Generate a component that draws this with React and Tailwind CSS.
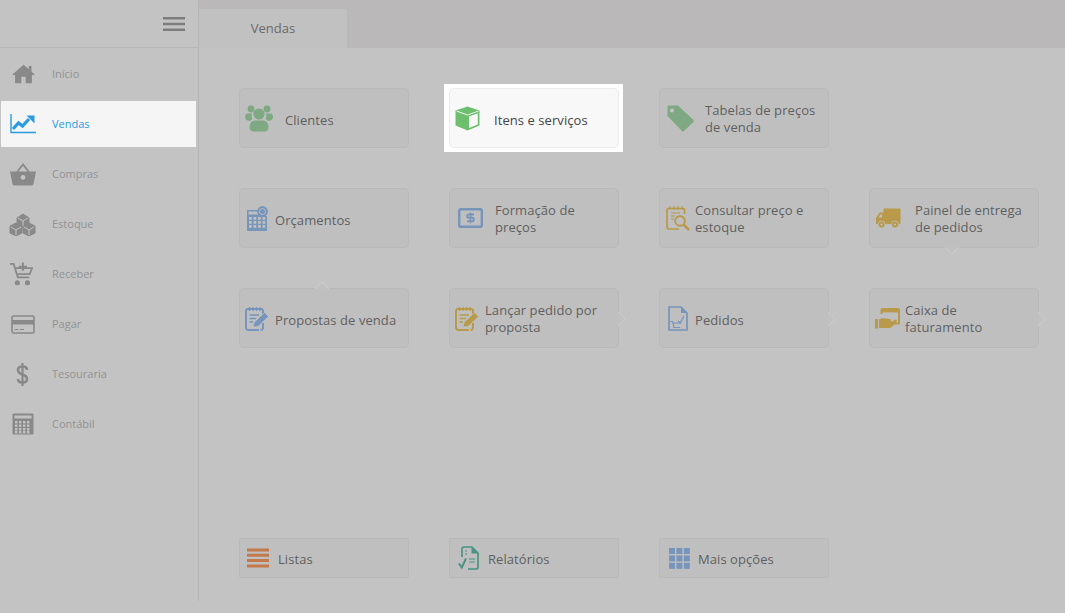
import React from "react";

const Svg = ({ w = 24, h = 24, vb, rw, rh, className = "", children }) => (
  <svg width={rw || w} height={rh || h} viewBox={vb || `0 0 ${w} ${h}`} className={`shrink-0 ${className}`}>{children}</svg>
);

const G = "#898989";
const HomeI = () => (
  <Svg w={26} h={22} rw={23} rh={20}><path d="M13 0.5 L19 5.5 V2 h3 v6.3 L26 12 h-3.5 V21.5 H15.5 V14 h-5 v7.5 H3.5 V12 H0 Z" fill={G} /></Svg>
);
const ChartI = () => (
  <Svg w={26} h={20}>
    <path d="M1 0 V18.5 H26" stroke="#2a9be0" strokeWidth="1.4" fill="none" />
    <path d="M3 15 L8.5 9 L12.5 12 L19 5" stroke="#2a9be0" strokeWidth="3.2" fill="none" />
    <path d="M16.5 1.5 H24.5 V9.5 Z" fill="#2a9be0" />
  </Svg>
);
const BasketI = () => (
  <Svg w={26} h={23}>
    <path d="M7 9 L13 1.5 L19 9" stroke={G} strokeWidth="1.8" fill="none" />
    <path fillRule="evenodd" d="M0 8.5 H26 L23.5 21 Q23 22.5 21.5 22.5 H4.5 Q3 22.5 2.5 21 Z M13 12 a2.4 2.4 0 1 0 .01 0 Z" fill={G} />
  </Svg>
);
const CubesI = () => (
  <Svg w={27} h={24}>
    <g stroke={G} strokeWidth="1" fill={G}>
      <path d="M8 6 L14 2 L20 6 V12 L14 15 L8 12 Z" />
      <path d="M1 14 L7 11 L13 14 V21 L7 24 L1 21 Z" />
      <path d="M14 14 L20 11 L26 14 V21 L20 24 L14 21 Z" />
    </g>
    <g stroke="#c3c3c3" strokeWidth="1" fill="none">
      <path d="M9 6 L14 9 L19 6 M14 9 V14" />
      <path d="M2 15 L7 18 L12 15 M7 18 V23" />
      <path d="M15 15 L20 18 L25 15 M20 18 V23" />
    </g>
  </Svg>
);
const CartI = () => (
  <Svg w={25} h={26} rw={23} rh={25}>
    <path d="M0 1.5 H4 L8.5 16 H21" stroke={G} strokeWidth="1.9" fill="none" />
    <path d="M6 6 H24 L21.5 12.5 H8" stroke={G} strokeWidth="1.9" fill="none" />
    <path d="M14 0 V9 M9.5 4.5 H18.5" stroke={G} strokeWidth="2.2" />
    <circle cx="8" cy="22" r="2.8" fill={G} />
    <circle cx="19" cy="22" r="2.8" fill={G} />
  </Svg>
);
const CardI = () => (
  <Svg w={24} h={19}>
    <rect x="1" y="1" width="22" height="17" rx="1.5" fill="none" stroke={G} strokeWidth="1.6" />
    <rect x="1" y="5" width="22" height="4.5" fill={G} />
    <path d="M3.5 14.5 H7.5 M9 14.5 H13" stroke={G} strokeWidth="1.2" />
  </Svg>
);
const DollarI = () => (
  <Svg w={13} h={23}>
    <path d="M6.5 0 V23" stroke={G} strokeWidth="2.2" />
    <path d="M11 7 Q11 3.5 6.5 3.5 Q2 3.5 2 7 Q2 10 6.5 11.5 Q11 13 11 16 Q11 19.5 6.5 19.5 Q2 19.5 2 16" fill="none" stroke={G} strokeWidth="2.6" />
  </Svg>
);
const CalcI = () => (
  <Svg w={22} h={22}>
    <rect x="0.5" y="0.5" width="21" height="21" rx="1" fill={G} />
    <rect x="2.5" y="2.5" width="17" height="3" fill="#c3c3c3" />
    {[8, 11.5, 15, 18].map((y) => [3, 7, 11, 15].map((x) => (
      <rect key={`${x}-${y}`} x={x} y={y} width="2.4" height="2.4" fill="#c3c3c3" />
    )))}
  </Svg>
);
const Burger = () => (
  <Svg w={22} h={14}>
    <path d="M0 1.2 H22 M0 7 H22 M0 12.8 H22" stroke="#7c7c7c" strokeWidth="2.4" />
  </Svg>
);

const GR = "#7fa983", BL = "#7794bb", YE = "#b89a4a", OR = "#c4794a", TE = "#4a9383";

const UsersI = () => (
  <Svg w={28} h={27}>
    <g fill={GR}>
      <circle cx="6" cy="4" r="3.4" /><circle cx="22" cy="4" r="3.4" />
      <path d="M0 12 Q0 8.5 3 8.5 H7 Q6 12 7.5 14 L5 16 Q0 15.5 0 12 Z" />
      <path d="M28 12 Q28 8.5 25 8.5 H21 Q22 12 20.5 14 L23 16 Q28 15.5 28 12 Z" />
      <circle cx="14" cy="9" r="5.6" />
      <path d="M4.5 22 Q5 15.5 10 15.5 H18 Q23 15.5 23.5 22 Q23.5 26.5 19 26.5 H9 Q4.5 26.5 4.5 22 Z" />
    </g>
  </Svg>
);
const BoxI = () => (
  <Svg w={25} h={25}>
    <path d="M12.5 0.5 L24.5 4.5 V19.5 L12.5 24.5 L0.5 19.5 V4.5 Z" fill="#6cbf6c" />
    <path d="M1.5 5 L12.5 9 L23.5 5" fill="none" stroke="#f8f8f8" strokeWidth="1" />
    <path d="M14 10.5 L22.8 7.2 V18.4 L14 22 Z" fill="#f8f8f8" />
  </Svg>
);
const TagI = () => (
  <Svg w={27} h={27}>
    <path d="M1.5 0.5 H11 L26.5 15 Q27 16 26.5 17 L17 26 Q16 27 15 26 L0.5 11 V1.5 Q0.5 0.5 1.5 0.5 Z" fill={GR} />
    <circle cx="5" cy="5.5" r="2" fill="#c5c5c5" />
  </Svg>
);
const CalcBlueI = () => (
  <Svg w={21} h={25}>
    <path d="M0 4 H14 V10 H20 V25 H0 Z" fill={BL} />
    <rect x="1.5" y="5.5" width="11" height="3" fill="#bfbfbf" />
    {[11, 15, 19].map((y) => [2, 6.5, 11, 15.5].map((x) => (
      <rect key={`${x}-${y}`} x={x} y={y} width="2.8" height="2.8" fill="#bfbfbf" />
    )))}
    <circle cx="15.5" cy="5.5" r="5.4" fill={BL} />
    <circle cx="15.5" cy="5.5" r="3" fill="none" stroke="#bfbfbf" strokeWidth="0.9" />
  </Svg>
);
const BillI = () => (
  <Svg w={25} h={20}>
    <rect x="1.2" y="1.2" width="22.6" height="17.6" rx="1.5" fill="none" stroke={BL} strokeWidth="2.4" />
    <path d="M16 6.5 H10.5 Q9.2 6.5 9.2 8 Q9.2 9.8 11 9.8 H14 Q15.8 9.8 15.8 11.5 Q15.8 13.3 14.2 13.3 H9" fill="none" stroke={BL} strokeWidth="2" />
    <path d="M12.5 4.5 V15.5" stroke={BL} strokeWidth="1.4" />
  </Svg>
);
const SearchDocI = () => (
  <Svg w={24} h={26}>
    <path d="M13 24 H3 Q1 24 1 22 V5 Q1 3.5 2.5 3.5 H17 Q18.5 3.5 18.5 5 V9" fill="none" stroke={YE} strokeWidth="1.7" />
    <path d="M4 1 V5 M8 1 V5 M12 1 V5 M16 1 V5" stroke={YE} strokeWidth="1.2" />
    <path d="M5 8 H14 M5 11 H9 M5 14 H8" stroke={YE} strokeWidth="1.2" />
    <circle cx="14" cy="16" r="4.8" fill="none" stroke={YE} strokeWidth="1.9" />
    <path d="M17.5 19.5 L23 25" stroke={YE} strokeWidth="2.6" />
  </Svg>
);
const TruckI = () => (
  <Svg w={25} h={21}>
    <rect x="7.5" y="0.5" width="17" height="15.5" rx="0.8" fill={YE} />
    <path d="M8 4.5 H3.5 L0 10 V16 H8 Z" fill={YE} />
    <path d="M2.4 9.5 L4.4 6.5 H6 V9.5 Z" fill="#bfbfbf" />
    <circle cx="5.5" cy="16.5" r="3.5" fill={YE} stroke="#bfbfbf" strokeWidth="0.8" />
    <circle cx="19" cy="16.5" r="3.5" fill={YE} stroke="#bfbfbf" strokeWidth="0.8" />
    <circle cx="5.5" cy="16.5" r="1.1" fill="#bfbfbf" />
    <circle cx="19" cy="16.5" r="1.1" fill="#bfbfbf" />
  </Svg>
);
const NoteI = ({ c }) => (
  <Svg w={24} h={25}>
    <path d="M14 24 H3.5 Q1 24 1 21.5 V5 Q1 3 3 3 H16 Q18 3 18 5 V9 M18 17 V21.5 Q18 24 15.5 24" fill="none" stroke={c} strokeWidth="1.9" />
    <path d="M4.5 1 V5 M8 1 V5 M11.5 1 V5 M15 1 V5" stroke={c} strokeWidth="1.2" />
    <path d="M4.5 9 H14 M4.5 12.5 H11 M4.5 16 H8" stroke={c} strokeWidth="1.3" />
    <path d="M8 21 L9 16.5 L19.5 6.5 L23.5 10.5 L13 20.5 Z" fill={c} stroke="#bfbfbf" strokeWidth="0.8" />
  </Svg>
);
const OrderI = () => (
  <Svg w={20} h={25}>
    <path d="M1 1 H13 L19 7 V24 H1 Z" fill="none" stroke={BL} strokeWidth="1.7" />
    <path d="M13 1 V7 H19 Z" fill={BL} />
    <path d="M2.5 15.5 H4.5 L6 21.5 H12 M5 17 H13.5" fill="none" stroke={BL} strokeWidth="1.1" />
    <path d="M10 15 L12 17 L16 10" fill="none" stroke={BL} strokeWidth="1.3" />
  </Svg>
);
const CashI = () => (
  <Svg w={25} h={21}>
    <path d="M6.5 6 V2 Q6.5 1 7.5 1 H23 Q24 1 24 2 V15.5 H18" fill="none" stroke={YE} strokeWidth="2" />
    <rect x="6.5" y="1" width="17.5" height="3.4" fill={YE} />
    <rect x="0" y="11" width="3" height="9.5" fill={YE} />
    <path d="M4 11.5 Q7 9.5 10 10.5 L15 11 Q17 12 15 13.8 H11 L18 13.3 L20.5 11.5 Q22.5 11.5 21.5 14 L17 19 Q16 20 14 20 H4 Z" fill={YE} />
  </Svg>
);
const ListI = () => (
  <Svg w={22} h={20}>
    <path d="M0 2 H22 M0 7.3 H22 M0 12.6 H22 M0 17.9 H22" stroke={OR} strokeWidth="3" />
  </Svg>
);
const ReportI = () => (
  <Svg w={21} h={24}>
    <path d="M4 11 V3 Q4 1 6 1 H14 L20 7 V21 Q20 23 18 23 H10" fill="none" stroke={TE} strokeWidth="1.7" />
    <path d="M13.5 1 L20 7.5 H13.5 Z" fill={TE} />
    <path d="M7 5 H9 M7 8 H9 M11 13 H17 M11 16 H17" stroke={TE} strokeWidth="1.2" />
    <path d="M1 17.5 L3.8 21.5 L8 12.5" fill="none" stroke={TE} strokeWidth="2" />
  </Svg>
);
const GridI = () => (
  <Svg w={21} h={21}>
    {[0, 7.4, 14.8].map((y) => [0, 7.4, 14.8].map((x) => (
      <rect key={`${x}-${y}`} x={x} y={y} width="6" height="6" fill={BL} />
    )))}
  </Svg>
);

const menu = [
  { label: "Início", Icon: HomeI, cls: "ml-[11px] w-[41px]" },
  { label: "Vendas", Icon: ChartI, cls: "ml-[9px] w-[43px]" },
  { label: "Compras", Icon: BasketI, cls: "ml-[9px] w-[43px]" },
  { label: "Estoque", Icon: CubesI, cls: "ml-[8px] w-[44px]" },
  { label: "Receber", Icon: CartI, cls: "ml-[9px] w-[43px]" },
  { label: "Pagar", Icon: CardI, cls: "ml-[10px] w-[42px]" },
  { label: "Tesouraria", Icon: DollarI, cls: "ml-[15px] w-[37px]" },
  { label: "Contábil", Icon: CalcI, cls: "ml-[11px] w-[41px]" },
];

const Arrow = ({ dir }) => {
  if (dir === "right")
    return (
      <svg width="8" height="16" viewBox="0 0 8 16" className="absolute right-[-8px] top-[22px]">
        <path d="M0 1 L7 8 L0 15 Z" fill="#c1c1c1" />
        <path d="M0 1 L7 8 L0 15" fill="none" stroke="#cbcbcb" />
      </svg>
    );
  if (dir === "down")
    return (
      <svg width="16" height="8" viewBox="0 0 16 8" className="absolute bottom-[-8px] left-[74px]">
        <path d="M1 0 L8 7 L15 0 Z" fill="#c1c1c1" />
        <path d="M1 0 L8 7 L15 0" fill="none" stroke="#cbcbcb" />
      </svg>
    );
  return (
    <svg width="16" height="8" viewBox="0 0 16 8" className="absolute top-[-8px] left-[74px]">
      <path d="M1 8 L8 1 L15 8 Z" fill="#c1c1c1" />
      <path d="M1 8 L8 1 L15 8" fill="none" stroke="#cbcbcb" />
    </svg>
  );
};

const Card = ({ icon: Icon, lines, pad, gap, arrow, small, hi }) => (
  <div className={`relative flex w-[170px] items-center border ${small ? "h-[40px] rounded-[2px]" : "h-[60px] rounded-[5px]"} ${pad} ${hi ? "border-[#ececec] bg-[#f8f8f8] text-[#454545]" : "border-[#b9b9b9] bg-[#bfbfbf] text-[#5f5f5f]"}`}>
    <Icon />
    <div className={`${gap} ${lines.length > 1 || small ? "pt-[2px]" : "pt-[4px]"} text-[13px] leading-[17px] tracking-[0.07px]`}>
      {lines.map((l) => <div key={l} className="whitespace-nowrap">{l}</div>)}
    </div>
    {arrow && <Arrow dir={arrow} />}
  </div>
);

export default function App() {
  return (
    <div className="flex h-[613px] w-[1065px] overflow-hidden bg-[#c3c3c3] font-['Open_Sans',sans-serif]">
      <aside className="h-[601px] w-[199px] shrink-0 border-r border-[#b5b5b5]">
        <div className="flex h-[48px] items-center justify-end border-b border-[#b8b8b8] pr-[13px]">
          <Burger />
        </div>
        <nav className="pt-[1px]">
          {menu.map(({ label, Icon, cls }) => {
            const on = label === "Vendas";
            return (
              <div key={label} className="flex h-[50px] items-center">
                <div className={`ml-[1px] flex h-[46px] w-[195px] items-center text-[11px] ${on ? "bg-[#f5f5f5] text-[#2a9be0]" : "text-[#929292]"}`}>
                  <div className={`flex ${cls} items-center`}><Icon /></div>
                  <span className="-ml-[1px]">{label}</span>
                </div>
              </div>
            );
          })}
        </nav>
      </aside>

      <main className="flex grow flex-col">
        <div className="flex h-[48px] items-end bg-[#bab8b8]">
          <div className="flex h-[39px] w-[148px] items-center justify-center rounded-tr-[2px] bg-[#c1c1c1] text-[13px] text-[#6a6a6a]">
            Vendas
          </div>
        </div>

        <div className="flex flex-col gap-[40px] pl-[40px] pt-[40px]">
          <div className="flex gap-[40px]">
            <Card icon={UsersI} lines={["Clientes"]} pad="pl-[5px]" gap="ml-[12px]" />
            <div className="-my-[4px] -ml-[5px] -mr-[4px] bg-white py-[4px] pl-[5px] pr-[4px]">
              <Card hi icon={BoxI} lines={["Itens e serviços"]} pad="pl-[5px]" gap="ml-[14px]" />
            </div>
            <Card icon={TagI} lines={["Tabelas de preços", "de venda"]} pad="pl-[7px]" gap="ml-[11px]" />
          </div>
          <div className="flex gap-[40px]">
            <Card icon={CalcBlueI} lines={["Orçamentos"]} pad="pl-[7px]" gap="ml-[7px]" />
            <Card icon={BillI} lines={["Formação de", "preços"]} pad="pl-[8px]" gap="ml-[12px]" />
            <Card icon={SearchDocI} lines={["Consultar preço e", "estoque"]} pad="pl-[6px]" gap="ml-[5px]" />
            <Card icon={TruckI} lines={["Painel de entrega", "de pedidos"]} pad="pl-[6px]" gap="ml-[14px]" arrow="down" />
          </div>
          <div className="flex gap-[40px]">
            <Card icon={() => <NoteI c={BL} />} lines={["Propostas de venda"]} pad="pl-[5px]" gap="ml-[6px]" arrow="up" />
            <Card icon={() => <NoteI c={YE} />} lines={["Lançar pedido por", "proposta"]} pad="pl-[5px]" gap="ml-[6px]" arrow="right" />
            <Card icon={OrderI} lines={["Pedidos"]} pad="pl-[8px]" gap="ml-[7px]" arrow="right" />
            <Card icon={CashI} lines={["Caixa de", "faturamento"]} pad="pl-[5px]" gap="ml-[5px]" arrow="right" />
          </div>
        </div>

        <div className="mt-[190px] flex gap-[40px] pl-[40px]">
          <Card small icon={ListI} lines={["Listas"]} pad="pl-[7px]" gap="ml-[9px]" />
          <Card small icon={ReportI} lines={["Relatórios"]} pad="pl-[8px]" gap="ml-[9px]" />
          <Card small icon={GridI} lines={["Mais opções"]} pad="pl-[9px]" gap="ml-[8px]" />
        </div>
      </main>
    </div>
  );
}
